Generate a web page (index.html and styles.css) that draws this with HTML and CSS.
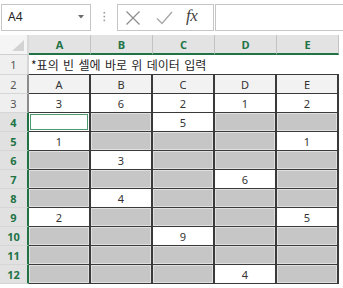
FILE: index.html
```html
<!DOCTYPE html>
<html lang="ko">
<head>
<meta charset="utf-8">
<link rel="stylesheet" href="styles.css">
</head>
<body>
<div class="bar">
  <div class="namebox"><span class="ref">A4</span><svg width="6" height="4" viewBox="0 0 6 4"><polygon points="0,0 6,0 3,3.5" fill="#6b6b6b"/></svg></div>
  <div class="dots"><svg width="3" height="10" viewBox="0 0 3 10"><rect x="0.5" y="0" width="1.6" height="1.6" fill="#9a9a9a"/><rect x="0.5" y="3.8" width="1.6" height="1.6" fill="#9a9a9a"/><rect x="0.5" y="7.6" width="1.6" height="1.6" fill="#9a9a9a"/></svg></div>
  <div class="fxbox">
    <svg class="ic-x" width="16" height="16" viewBox="0 0 16 16"><path d="M1.5 1.5 L14.5 14.5 M14.5 1.5 L1.5 14.5" stroke="#8c8c8c" stroke-width="1.2" fill="none"/></svg>
    <svg class="ic-check" width="17" height="14" viewBox="0 0 17 14"><path d="M1 7.5 L6 12.5 L16 1" stroke="#a8a8a8" stroke-width="1.4" fill="none"/></svg>
    <span class="fx">fx</span>
  </div>
  <div class="formula"></div>
</div>
<div class="sheet">
  <div class="corner"><svg width="13" height="12" viewBox="0 0 13 12"><polygon points="12,0 12,11 0,11" fill="#d3d3d3"/></svg></div>
  <div class="ch">A</div><div class="ch">B</div><div class="ch">C</div><div class="ch">D</div><div class="ch">E</div>

  <div class="rh r1">1</div>
  <div class="title">*표의 빈 셀에 바로 위 데이터 입력</div>

  <div class="rh tb">2</div>
  <div class="c hd">A</div><div class="c hd">B</div><div class="c hd">C</div><div class="c hd">D</div><div class="c hd">E</div>

  <div class="rh tb">3</div>
  <div class="c">3</div><div class="c">6</div><div class="c">2</div><div class="c">1</div><div class="c">2</div>

  <div class="rh sel">4</div>
  <div class="c active"></div><div class="c g"></div><div class="c">5</div><div class="c g"></div><div class="c g"></div>

  <div class="rh sel">5</div>
  <div class="c">1</div><div class="c g"></div><div class="c g"></div><div class="c g"></div><div class="c">1</div>

  <div class="rh sel">6</div>
  <div class="c g"></div><div class="c">3</div><div class="c g"></div><div class="c g"></div><div class="c g"></div>

  <div class="rh sel">7</div>
  <div class="c g"></div><div class="c g"></div><div class="c g"></div><div class="c">6</div><div class="c g"></div>

  <div class="rh sel">8</div>
  <div class="c g"></div><div class="c">4</div><div class="c g"></div><div class="c g"></div><div class="c g"></div>

  <div class="rh sel">9</div>
  <div class="c">2</div><div class="c g"></div><div class="c g"></div><div class="c g"></div><div class="c">5</div>

  <div class="rh sel">10</div>
  <div class="c g"></div><div class="c g"></div><div class="c">9</div><div class="c g"></div><div class="c g"></div>

  <div class="rh sel">11</div>
  <div class="c g"></div><div class="c g"></div><div class="c g"></div><div class="c g"></div><div class="c g"></div>

  <div class="rh sel last">12</div>
  <div class="c g last"></div><div class="c g last"></div><div class="c g last"></div><div class="c last">4</div><div class="c g last"></div>
</div>
</body>
</html>
```

FILE: styles.css
```css
* { box-sizing: border-box; margin: 0; padding: 0; }

body {
  width: 343px;
  height: 288px;
  overflow: hidden;
  background: #ffffff;
  font-family: "Noto Sans", "Noto Sans CJK KR", sans-serif;
}

.bar {
  display: flex;
  height: 35px;
  padding: 4px 0 4px 1px;
}

.namebox {
  width: 90px;
  border: 1px solid #c6c6c6;
  display: flex;
  align-items: center;
  justify-content: space-between;
  padding: 0 6px 2px 6px;
}

.ref {
  font-size: 12px;
  color: #222;
}

.dots {
  width: 26px;
  display: flex;
  align-items: center;
  justify-content: center;
  padding-bottom: 2px;
}

.fxbox {
  width: 97px;
  border: 1px solid #c6c6c6;
  display: flex;
  align-items: center;
  padding-left: 7px;
}

.ic-check { margin-left: 15px; }

.fx {
  margin-left: 13px;
  font-family: "Liberation Serif", serif;
  font-style: italic;
  font-size: 17px;
  color: #444;
  line-height: 1;
  padding-bottom: 4px;
  letter-spacing: -0.5px;
}

.formula {
  flex: 1;
  margin-left: 1px;
  margin-right: -3px;
  border: 1px solid #c6c6c6;
}

.sheet {
  display: grid;
  grid-template-columns: 29px repeat(5, 62px);
  grid-template-rows: 20px repeat(11, 19px) 20px;
}

.corner {
  background: #f5f5f5;
  border-right: 2px solid #d9d9d9;
  border-bottom: 1px solid #cfcfcf;
  display: flex;
  justify-content: flex-end;
  align-items: flex-end;
  padding: 0 2px 2px 0;
}

.ch {
  background: #e3e3e3;
  border-right: 1px solid #c3c3c3;
  border-bottom: 2px solid #217346;
  color: #217346;
  font-family: "Open Sans", "Noto Sans", sans-serif;
  font-weight: 700;
  font-size: 11px;
  display: flex;
  align-items: center;
  justify-content: center;
}

.rh {
  background: #efefef;
  border-right: 2px solid #d6d6d6;
  border-top: 1px solid #d6d6d6;
  color: #555;
  font-size: 11px;
  display: flex;
  align-items: center;
  justify-content: center;
}

.rh.r1 { border-top: none; }
.rh.tb { border-right-color: #8c8c8c; }

.rh.sel {
  background: #e1e1e1;
  color: #217346;
  font-family: "Open Sans", "Noto Sans", sans-serif;
  font-weight: 700;
  border-right-color: #217346;
}

.rh.last { border-bottom: 1px solid #d6d6d6; }

.title {
  grid-column: 2 / span 5;
  font-family: "Noto Sans CJK KR", sans-serif;
  font-size: 12px;
  word-spacing: 1px;
  color: #1e1e1e;
  display: flex;
  align-items: center;
  padding-left: 2px;
  white-space: nowrap;
}

.c {
  background: #ffffff;
  border-top: 1px solid #3a3a3a;
  border-right: 2px solid #3a3a3a;
  font-size: 11px;
  color: #333;
  display: flex;
  align-items: center;
  justify-content: center;
}

.c.last { border-bottom: 1px solid #3a3a3a; }

.c.hd { background: #f2f2f2; }

.c.g {
  background: #c6c6c6;
  box-shadow: inset 0 0 0 1px #e0e0e0;
}

.c.active {
  box-shadow: inset 0 0 0 1px #ffffff, inset 0 0 0 2px #4d9a70;
}
```
